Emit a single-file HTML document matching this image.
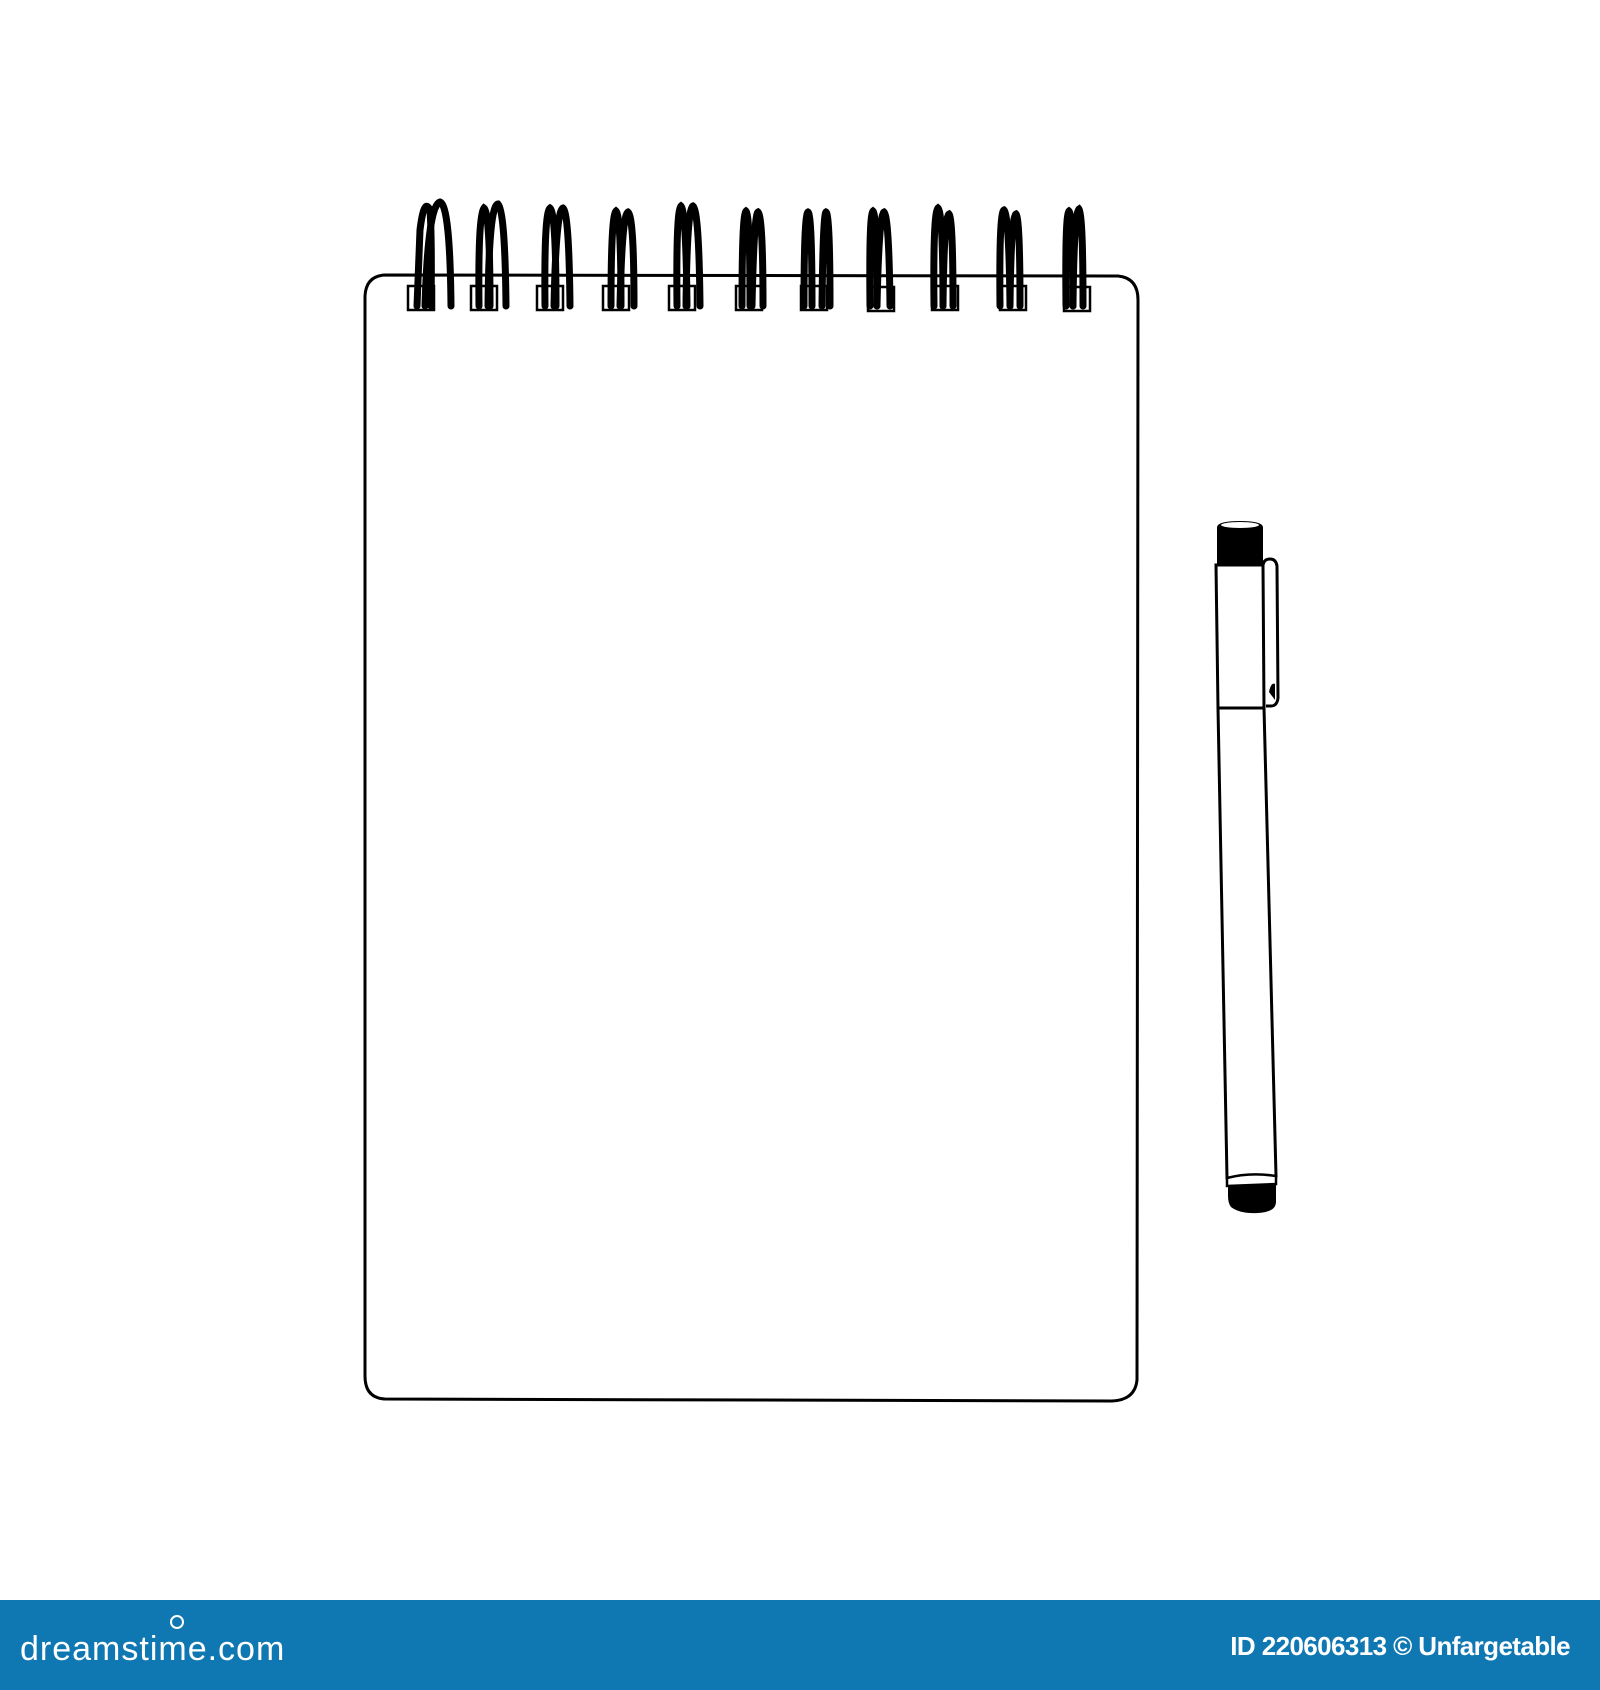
<!DOCTYPE html>
<html><head><meta charset="utf-8"><style>
html,body{margin:0;padding:0;background:#fff;width:1600px;height:1690px;overflow:hidden;position:relative;font-family:"Liberation Sans",sans-serif}
#foot{position:absolute;left:0;top:1600px;width:1600px;height:90px;background:#0f78b2;color:#fff}
#logo{position:absolute;left:20px;top:29px;font-size:34px;letter-spacing:1px;line-height:40px}
#logo .sp{position:absolute;left:150px;top:-14px;width:10px;height:10px;border:2.5px solid #fff;border-radius:50%}
#id{position:absolute;right:30px;top:30px;font-size:26px;font-weight:bold;letter-spacing:-0.6px;line-height:32px}
</style></head><body>
<svg width="1600" height="1600" style="position:absolute;left:0;top:0">
<path d="M385 275 L1118 276 Q1138 278 1138 300 L1137 1380 Q1135 1400 1112 1401 L385 1399 Q365 1398 365 1376 L365 296 Q366 276 385 275 Z" fill="none" stroke="#000" stroke-width="3"/>
<g fill="none" stroke="#000" stroke-width="2.5">
<rect x="408" y="286" width="26" height="24"/><rect x="471" y="286" width="26" height="24"/><rect x="537" y="286" width="26" height="24"/><rect x="603" y="286" width="26" height="24"/><rect x="669" y="286" width="26" height="24"/><rect x="736" y="286" width="26" height="24"/><rect x="801" y="286" width="26" height="24"/><rect x="868" y="287" width="26" height="24"/><rect x="932" y="286" width="26" height="24"/><rect x="1000" y="286" width="26" height="24"/><rect x="1064" y="287" width="26" height="24"/>
</g>
<g fill="none" stroke="#000" stroke-width="7" stroke-linecap="round">
<path d="M417 306 L420 230 Q424 197 430 210 Q432 240 431 306"/><path d="M425 306 Q428 205 440 202 Q450 205 451 306"/>
<path d="M479 306 Q478 215 484 208 Q490 212 490 306"/><path d="M488 306 Q489 205 498 204 Q505 210 506 306"/>
<path d="M545 306 Q544 212 550 208 Q556 212 556 306"/><path d="M554 306 Q556 210 563 208 Q569 212 570 306"/>
<path d="M611 306 Q611 215 616 211 Q621 215 621 306"/><path d="M620 306 Q622 214 628 212 Q634 216 634 306"/>
<path d="M677 306 Q676 210 681 206 Q686 210 687 306"/><path d="M686 306 Q687 208 693 206 Q699 210 700 306"/>
<path d="M742 306 Q742 214 746 211 Q750 214 750 306"/><path d="M752 306 Q754 214 758 212 Q763 216 763 306"/>
<path d="M804 306 Q804 214 808 212 Q812 214 812 306"/><path d="M822 306 Q823 214 826 212 Q830 214 830 306"/>
<path d="M870 306 Q869 214 873 211 Q877 214 877 306"/><path d="M877 306 Q879 214 884 212 Q889 216 890 306"/>
<path d="M934 306 Q933 212 938 208 Q943 212 943 306"/><path d="M943 306 Q944 216 949 214 Q953 218 953 306"/>
<path d="M1000 306 Q999 212 1004 210 Q1009 214 1010 306"/><path d="M1010 306 Q1011 216 1016 214 Q1020 218 1020 306"/>
<path d="M1066 306 Q1065 214 1069 211 Q1073 214 1073 306"/><path d="M1073 306 Q1074 212 1079 209 Q1083 214 1083 306"/>
</g>
<g>
<path d="M1217 527 Q1218 521 1240 521 Q1262 521 1263 527 L1263 565 L1217 565 Z" fill="#000"/>
<ellipse cx="1240" cy="525" rx="19" ry="3" fill="#fff"/>
<path d="M1216 565 L1263 565 L1264 708 L1218 708 Z" fill="#fff" stroke="#000" stroke-width="3"/>
<path d="M1263 565 Q1264 559 1270 559 Q1276 559 1277 566 L1278 698 Q1277 706 1271 706 L1266 706" fill="none" stroke="#000" stroke-width="3"/>
<path d="M1269 692 Q1271 682 1275 684 L1275 700 Z" fill="#000"/>
<path d="M1218 708 L1264 708 L1276 1176 L1227 1178 Z" fill="#fff" stroke="#000" stroke-width="3"/>
<path d="M1227 1178 Q1250 1172 1276 1176 L1276 1184 L1227 1186 Z" fill="#fff" stroke="#000" stroke-width="2.5"/>
<path d="M1228 1186 L1276 1184 L1276 1202 Q1276 1212 1258 1213 Q1240 1214 1231 1207 Q1228 1203 1228 1196 Z" fill="#000"/>
</g>
</svg>
<div id="foot"><div id="logo">dreamstime.com<span class="sp"></span></div><div id="id">ID 220606313 © Unfargetable</div></div>
</body></html>
